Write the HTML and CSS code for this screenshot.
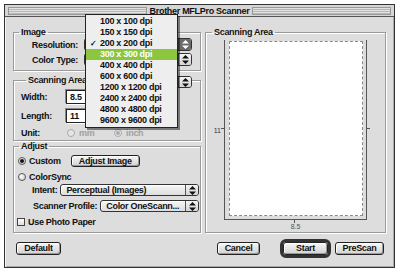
FILE: index.html
```html
<!DOCTYPE html>
<html>
<head>
<meta charset="utf-8">
<link rel="stylesheet" href="styles.css">
</head>
<body>
<div class="window">
  <div class="titlebar">
    <div class="stripes"></div>
    <span class="title">Brother MFLPro Scanner</span>
    <div class="stripes"></div>
  </div>
  <div class="body">
    <div class="main">
      <div class="left">
        <fieldset class="group g-image">
          <legend>Image</legend>
          <div class="row prow">
            <span class="rl">Resolution:</span>
            <div class="popup pressed"><span class="pv"></span><span class="arrow"><svg width="7" height="9" viewBox="0 0 7 9"><path d="M3.5 0 L7 3.5 H0 Z M3.5 9 L7 5.5 H0 Z" fill="currentColor"/></svg></span></div>
          </div>
          <div class="row prow r2">
            <span class="rl">Color Type:</span>
            <div class="popup"><span class="pv"></span><span class="arrow"><svg width="7" height="9" viewBox="0 0 7 9"><path d="M3.5 0 L7 3.5 H0 Z M3.5 9 L7 5.5 H0 Z" fill="currentColor"/></svg></span></div>
          </div>
        </fieldset>
        <fieldset class="group g-area">
          <legend>Scanning Area</legend>
          <div class="area-head">
            <div class="popup small"><span class="pv"></span><span class="arrow"><svg width="7" height="9" viewBox="0 0 7 9"><path d="M3.5 0 L7 3.5 H0 Z M3.5 9 L7 5.5 H0 Z" fill="currentColor"/></svg></span></div>
          </div>
          <div class="row frow">
            <span class="fl">Width:</span>
            <div class="field">8.5</div>
          </div>
          <div class="row frow r-len">
            <span class="fl">Length:</span>
            <div class="field">11</div>
          </div>
          <div class="row urow">
            <span class="fl">Unit:</span>
            <span class="opt dis"><span class="radio"></span><span>mm</span></span>
            <span class="opt dis"><span class="radio on"></span><span>inch</span></span>
          </div>
        </fieldset>
        <fieldset class="group g-adjust">
          <legend>Adjust</legend>
          <div class="row arow">
            <span class="opt"><span class="radio on"></span><span>Custom</span></span>
            <button class="btn adj">Adjust Image</button>
          </div>
          <div class="row crow">
            <span class="opt"><span class="radio"></span><span>ColorSync</span></span>
          </div>
          <div class="row irow">
            <span class="il">Intent:</span>
            <div class="popup grow"><span class="pv">Perceptual (Images)</span><span class="arrow"><svg width="7" height="9" viewBox="0 0 7 9"><path d="M3.5 0 L7 3.5 H0 Z M3.5 9 L7 5.5 H0 Z" fill="currentColor"/></svg></span></div>
          </div>
          <div class="row irow r-prof">
            <span class="il">Scanner Profile:</span>
            <div class="popup grow"><span class="pv">Color OneScann...</span><span class="arrow"><svg width="7" height="9" viewBox="0 0 7 9"><path d="M3.5 0 L7 3.5 H0 Z M3.5 9 L7 5.5 H0 Z" fill="currentColor"/></svg></span></div>
          </div>
          <div class="row prow-photo">
            <span class="opt"><span class="check"></span><span>Use Photo Paper</span></span>
          </div>
        </fieldset>
      </div>
      <fieldset class="group g-preview">
        <legend>Scanning Area</legend>
        <div class="diagram">
          <div class="vlabel">11</div>
          <div class="bracket"><div class="page"></div></div>
        </div>
        <div class="hlabel">8.5</div>
      </fieldset>
    </div>
    <div class="buttons">
      <button class="btn b-default">Default</button>
      <button class="btn b-cancel">Cancel</button>
      <div class="ring"><button class="btn b-start">Start</button></div>
      <button class="btn b-prescan">PreScan</button>
    </div>
  </div>
  <div class="menu">
    <div class="item"><span class="mark"></span>100 x 100 dpi</div>
    <div class="item"><span class="mark"></span>150 x 150 dpi</div>
    <div class="item"><span class="mark">✓</span>200 x 200 dpi</div>
    <div class="item sel"><span class="mark"></span>300 x 300 dpi</div>
    <div class="item"><span class="mark"></span>400 x 400 dpi</div>
    <div class="item"><span class="mark"></span>600 x 600 dpi</div>
    <div class="item"><span class="mark"></span>1200 x 1200 dpi</div>
    <div class="item"><span class="mark"></span>2400 x 2400 dpi</div>
    <div class="item"><span class="mark"></span>4800 x 4800 dpi</div>
    <div class="item"><span class="mark"></span>9600 x 9600 dpi</div>
  </div>
</div>
</body>
</html>
```
FILE: styles.css
```css
* { box-sizing: border-box; }
body {
  margin: 0;
  background: #fff;
  font-family: "Liberation Sans", Arial, sans-serif;
  font-size: 9px;
  font-weight: bold;
  letter-spacing: -0.3px;
  color: #111;
}
.window {
  margin: 4px 0 0 4px;
  width: 391px;
  height: 264px;
  border: 1px solid #333;
  background: #dddddd;
  position: relative;
  box-shadow: inset 1px 1px 0 #f4f4f4, inset -1px -1px 0 #aaa;
}
.titlebar {
  height: 12px;
  border-bottom: 1px solid #555;
  display: flex;
  align-items: stretch;
  padding: 2px 3px 1px 3px;
  background: #d6d6d6;
}
.stripes {
  flex: 1;
  border: 1px solid #999;
  background: repeating-linear-gradient(to bottom, #e2e2e2 0 1px, #b8b8b8 1px 2px);
}
.title {
  padding: 0 3px;
  line-height: 9px;
  color: #111;
}
.body { padding: 10px 7px 0 8px; }
.main { display: flex; gap: 4px; }
.left { width: 188px; display: flex; flex-direction: column; }
.group {
  margin: 0;
  padding: 0;
  min-width: 0;
  border: 1px solid #9a9a9a;
  box-shadow: 1px 1px 0 #fff, inset 1px 1px 0 #fff;
}
.group legend {
  padding: 0 2px;
  line-height: 11px;
  height: 11px;
  margin-left: 5px;
}
.row { display: flex; align-items: center; }
.prow { height: 13px; }
.prow.r2 { margin-top: 2px; }
.g-image { padding-bottom: 4px; }
.rl { width: 64px; text-align: right; }
.popup {
  display: flex;
  height: 13px;
  border: 1px solid #333;
  border-radius: 3px;
  background: linear-gradient(#f6f6f6, #dedede);
  box-shadow: inset 1px 1px 0 #fff;
  overflow: hidden;
}
.prow .popup { width: 108px; margin-left: 6px; }
.popup .pv { flex: 1; padding-left: 4px; line-height: 11px; white-space: nowrap; overflow: hidden; }
.popup .arrow {
  width: 13px;
  border-left: 1px solid #555;
  display: flex;
  align-items: center;
  justify-content: center;
  color: #111;
  background: linear-gradient(#f4f4f4, #d4d4d4);
}
.popup.pressed .arrow { background: #6a6a6a; color: #fff; }
.g-area { margin-top: 4px; padding-bottom: 2px; }
.g-area legend { margin-left: 12px; }
.area-head { height: 0; display: flex; justify-content: flex-end; padding-right: 8px; }
.popup.small { width: 70px; height: 12px; margin-top: -10px; }
.frow { height: 14px; margin-top: 4px; padding-left: 7px; }
.frow.r-len { margin-top: 5px; }
.fl { width: 45px; }
.field {
  width: 32px;
  height: 14px;
  background: #fff;
  border: 1px solid #222;
  box-shadow: -1px -1px 0 #888, 1px 1px 0 #fff;
  padding-left: 3px;
  line-height: 12px;
}
.urow { height: 11px; margin-top: 4px; padding-left: 7px; }
.urow .fl { width: 46px; }
.opt { display: flex; align-items: center; gap: 3px; }
.urow .opt { width: 47px; gap: 4px; }
.opt.dis { color: #a0a0a0; }
.radio {
  width: 8px;
  height: 8px;
  border-radius: 50%;
  border: 1px solid #555;
  background: radial-gradient(circle at 35% 35%, #fff, #c8c8c8);
  display: flex;
  align-items: center;
  justify-content: center;
}
.radio.on::after {
  content: "";
  width: 4px;
  height: 4px;
  border-radius: 50%;
  background: #111;
}
.dis .radio { border-color: #aaa; background: #e6e6e6; }
.dis .radio.on::after { background: #aaa; }
.check {
  width: 8px;
  height: 8px;
  border: 1px solid #444;
  background: linear-gradient(#fff, #ddd);
}
.g-adjust { padding-bottom: 5px; }
.arow { height: 12px; margin-top: 3px; padding-left: 4px; }
.crow { height: 11px; margin-top: 4px; padding-left: 4px; }
.irow { height: 12px; margin-top: 2px; padding-left: 18px; padding-right: 1px; }
.irow.r-prof { margin-top: 4px; padding-left: 19px; }
.il { margin-right: 3px; }
.popup.grow { flex: 1; height: 12px; }
.popup.grow .pv { line-height: 10px; padding-left: 5px; }
.prow-photo { height: 10px; margin-top: 5px; padding-left: 3px; }
.btn {
  font-family: inherit;
  font-size: 9px;
  font-weight: bold;
  letter-spacing: -0.3px;
  color: #111;
  height: 13px;
  padding: 0;
  border: 1px solid #222;
  border-radius: 3px;
  background: linear-gradient(#f6f6f6, #d2d2d2);
  box-shadow: inset 1px 1px 0 #fff, inset -1px -1px 0 #9a9a9a;
  line-height: 11px;
}
.btn.adj { width: 69px; height: 12px; margin-left: 10px; line-height: 10px; }
.g-preview { width: 181px; }
.g-preview legend { margin-left: 6px; }
.diagram { display: flex; margin-top: 2px; }
.vlabel {
  width: 18px;
  align-self: center;
  text-align: right;
  padding-right: 3px;
  font-size: 7px;
  font-weight: normal;
  letter-spacing: 0;
  color: #333;
}
.bracket {
  position: relative;
  width: 143px;
  height: 180px;
  border: 1px solid #555;
  border-top: none;
  padding: 1px 3px 3px 4px;
}
.bracket::before, .bracket::after {
  content: "";
  position: absolute;
  top: 88px;
  width: 3px;
  height: 1px;
  background: #555;
}
.bracket::before { left: -4px; }
.bracket::after { right: -4px; }
.page {
  height: 100%;
  background: #fff;
  border: 1px dashed #888;
}
.hlabel {
  position: relative;
  margin-left: 18px;
  width: 143px;
  text-align: center;
  font-size: 7px;
  font-weight: normal;
  letter-spacing: 0;
  color: #555;
  padding-top: 3px;
  line-height: 7px;
  height: 12px;
}
.hlabel::before {
  content: "";
  position: absolute;
  left: 70px;
  top: 0;
  width: 1px;
  height: 3px;
  background: #555;
}
.buttons {
  display: flex;
  align-items: center;
  height: 19px;
  margin-top: 6px;
  padding-left: 3px;
}
.b-default { width: 45px; }
.b-cancel { width: 43px; margin-left: auto; }
.ring {
  margin-left: 20px;
  border: 3px solid #333;
  border-radius: 6px;
  display: flex;
}
.b-start { width: 45px; border-width: 1px; }
.b-prescan { width: 49px; margin-left: 4px; margin-right: 3px; }
.menu {
  position: absolute;
  left: 80px;
  top: 9px;
  width: 93px;
  border: 1px solid #222;
  background: #eeeeee;
  box-shadow: 2px 2px 0 rgba(0, 0, 0, 0.45);
  padding: 1px 0 1px 0;
}
.item {
  display: flex;
  height: 11px;
  line-height: 11px;
  white-space: nowrap;
}
.item .mark { width: 14px; padding-left: 4px; font-size: 8px; }
.item.sel { background: #8cc63f; color: #fff; }
```
